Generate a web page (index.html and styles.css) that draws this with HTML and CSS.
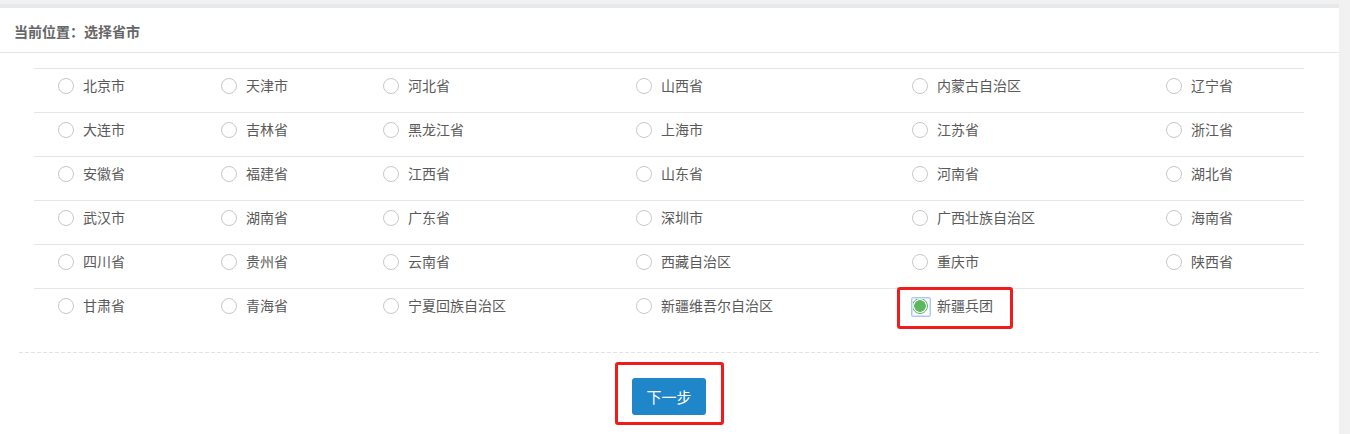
FILE: index.html
```html
<!DOCTYPE html>
<html lang="zh-CN">
<head>
<meta charset="utf-8">
<title>选择省市</title>
<link rel="stylesheet" href="styles.css">
</head>
<body>
<div class="panel">
  <div class="panel-head">当前位置：选择省市</div>
  <div class="panel-body">
    <div class="city-table">
      <div class="row">
        <label class="cell"><span class="radio"></span><span class="name">北京市</span></label>
        <label class="cell"><span class="radio"></span><span class="name">天津市</span></label>
        <label class="cell"><span class="radio"></span><span class="name">河北省</span></label>
        <label class="cell"><span class="radio"></span><span class="name">山西省</span></label>
        <label class="cell"><span class="radio"></span><span class="name">内蒙古自治区</span></label>
        <label class="cell"><span class="radio"></span><span class="name">辽宁省</span></label>
      </div>
      <div class="row">
        <label class="cell"><span class="radio"></span><span class="name">大连市</span></label>
        <label class="cell"><span class="radio"></span><span class="name">吉林省</span></label>
        <label class="cell"><span class="radio"></span><span class="name">黑龙江省</span></label>
        <label class="cell"><span class="radio"></span><span class="name">上海市</span></label>
        <label class="cell"><span class="radio"></span><span class="name">江苏省</span></label>
        <label class="cell"><span class="radio"></span><span class="name">浙江省</span></label>
      </div>
      <div class="row">
        <label class="cell"><span class="radio"></span><span class="name">安徽省</span></label>
        <label class="cell"><span class="radio"></span><span class="name">福建省</span></label>
        <label class="cell"><span class="radio"></span><span class="name">江西省</span></label>
        <label class="cell"><span class="radio"></span><span class="name">山东省</span></label>
        <label class="cell"><span class="radio"></span><span class="name">河南省</span></label>
        <label class="cell"><span class="radio"></span><span class="name">湖北省</span></label>
      </div>
      <div class="row">
        <label class="cell"><span class="radio"></span><span class="name">武汉市</span></label>
        <label class="cell"><span class="radio"></span><span class="name">湖南省</span></label>
        <label class="cell"><span class="radio"></span><span class="name">广东省</span></label>
        <label class="cell"><span class="radio"></span><span class="name">深圳市</span></label>
        <label class="cell"><span class="radio"></span><span class="name">广西壮族自治区</span></label>
        <label class="cell"><span class="radio"></span><span class="name">海南省</span></label>
      </div>
      <div class="row">
        <label class="cell"><span class="radio"></span><span class="name">四川省</span></label>
        <label class="cell"><span class="radio"></span><span class="name">贵州省</span></label>
        <label class="cell"><span class="radio"></span><span class="name">云南省</span></label>
        <label class="cell"><span class="radio"></span><span class="name">西藏自治区</span></label>
        <label class="cell"><span class="radio"></span><span class="name">重庆市</span></label>
        <label class="cell"><span class="radio"></span><span class="name">陕西省</span></label>
      </div>
      <div class="row">
        <label class="cell"><span class="radio"></span><span class="name">甘肃省</span></label>
        <label class="cell"><span class="radio"></span><span class="name">青海省</span></label>
        <label class="cell"><span class="radio"></span><span class="name">宁夏回族自治区</span></label>
        <label class="cell"><span class="radio"></span><span class="name">新疆维吾尔自治区</span></label>
        <label class="cell cell-marked"><span class="radio radio-checked"></span><span class="name">新疆兵团</span><span class="mark-box"></span></label>
        <span class="cell"></span>
      </div>
    </div>
    <div class="dashed"></div>
    <div class="actions">
      <div class="mark-wrap">
        <button class="btn-next" type="button">下一步</button>
      </div>
    </div>
  </div>
</div>
</body>
</html>
```

FILE: styles.css
```css
html, body {
  margin: 0;
  padding: 0;
}
body {
  background: #f1f1f1;
  padding-top: 4px;
  font-family: "Noto Sans CJK SC", "Noto Sans", sans-serif;
  color: #555;
  height: 430px;
  overflow: hidden;
}
.panel {
  width: 1339px;
  background: #fff;
  border-top: 4px solid #e6e9ec;
  min-height: 460px;
}
.panel-head {
  height: 45px;
  box-sizing: border-box;
  padding: 3px 0 0 14px;
  line-height: 40px;
  font-size: 14px;
  font-weight: bold;
  color: #666;
  border-bottom: 1px solid #e6e6e6;
}
.panel-body {
  padding: 15px 20px 0 19px;
}
.city-table {
  margin: 0 15px;
}
.row {
  display: grid;
  grid-template-columns: 163px 162px 253px 276px 254px 162px;
  height: 44px;
  box-sizing: border-box;
  border-top: 1px solid #e6e6e6;
}
.cell {
  position: relative;
  display: flex;
  align-items: center;
  height: 16px;
  margin-top: 9px;
  padding-left: 24px;
  font-size: 14px;
  line-height: 16px;
  color: #5a5a5a;
}
.name {
  position: relative;
  top: -1px;
}
.radio {
  position: relative;
  width: 16px;
  height: 16px;
  box-sizing: border-box;
  border: 1px solid #c8c8c8;
  border-radius: 50%;
  background: #fff;
  margin-right: 9px;
  flex: none;
}
.radio-checked {
  border: 1px solid #5cb85c;
  background: radial-gradient(circle, #5cb85c 0, #5cb85c 5.5px, #fff 6px);
}
.radio-checked::before {
  content: "";
  position: absolute;
  left: -2px;
  top: -2px;
  width: 18px;
  height: 18px;
  border: 1px solid #a9c8f2;
  border-radius: 2px;
  box-shadow: inset 0 0 0 1px #d5e5fa;
}
.mark-box {
  position: absolute;
  left: 9px;
  top: -11px;
  width: 116px;
  height: 42px;
  box-sizing: border-box;
  border: 3px solid #f01c1c;
  border-radius: 3px;
}
.dashed {
  height: 1px;
  margin-top: 20px;
  background: repeating-linear-gradient(to right, #e3e3e3 0, #e3e3e3 4px, transparent 4px, transparent 6px);
}
.actions {
  display: flex;
  justify-content: center;
  padding-top: 9px;
  margin-left: -19px;
  margin-right: -20px;
}
.mark-wrap {
  border: 3px solid #f01c1c;
  border-radius: 3px;
  padding: 13px 15px 7px 14px;
}
.btn-next {
  display: block;
  width: 74px;
  height: 37px;
  border: none;
  border-radius: 3px;
  background: #1f87c9;
  color: #fff;
  font-family: "Noto Sans CJK SC", "Noto Sans", sans-serif;
  font-size: 15px;
  padding: 0;
  cursor: pointer;
}
```
